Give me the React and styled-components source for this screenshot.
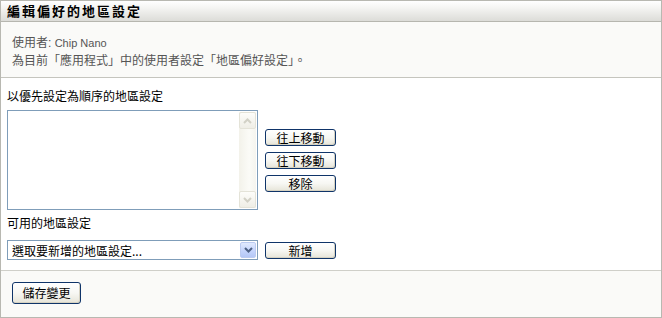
import React from "react";
import styled, { createGlobalStyle } from "styled-components";

const Global = createGlobalStyle`
  html, body { margin: 0; padding: 0; background: #fff; }
  body {
    font-family: "Liberation Sans", "Noto Sans CJK TC", sans-serif;
    font-size: 12px;
    color: #000;
  }
  * { box-sizing: border-box; }
`;

const Panel = styled.div`
  width: 662px;
  height: 318px;
  border: 1px solid #b8b8b1;
  display: flex;
  flex-direction: column;
  background: #fff;
`;

const Header = styled.div`
  height: 21px;
  flex: none;
  border-bottom: 1px solid #b6b6af;
  background: linear-gradient(#ffffff 0%, #f4f4f2 35%, #dcdcd8 100%);
  padding-left: 6px;
  display: flex;
  align-items: center;
`;

const Title = styled.h1`
  margin: 0;
  font-size: 13px;
  font-weight: 700;
  letter-spacing: 2px;
  line-height: 20px;
  font-family: "Noto Sans CJK TC", sans-serif;
  color: #000;
`;

const Info = styled.div`
  height: 56px;
  flex: none;
  background: #fafaf8;
  border-bottom: 1px solid #c5c5be;
  padding: 12px 0 0 11px;
  color: #555;
`;

const Line = styled.div`
  line-height: 18px;
  height: 18px;
  white-space: nowrap;
`;

const Latin = styled.span`
  font-size: 11px;
`;

const Main = styled.div`
  flex: none;
  height: 193px;
  border-bottom: 1px solid #cfcfc9;
  padding: 10px 0 0 6px;
  display: flex;
  flex-direction: column;
`;

const Label = styled.div`
  line-height: 18px;
  height: 18px;
  white-space: nowrap;
`;

const ListRow = styled.div`
  display: flex;
  align-items: center;
  gap: 7px;
  margin-top: 4px;
`;

const ListBox = styled.div`
  width: 251px;
  height: 100px;
  border: 1px solid #7f9db9;
  background: #fff;
  display: flex;
  justify-content: flex-end;
  padding: 1px;
`;

const ScrollBar = styled.div`
  width: 17px;
  height: 100%;
  background: linear-gradient(to right, #f3f2ea, #fbfbf7 60%, #f5f4ee);
  display: flex;
  flex-direction: column;
  justify-content: space-between;
`;

const ScrollBtn = styled.div`
  width: 17px;
  height: 17px;
  border: 1px solid #e4e3d8;
  border-radius: 2px;
  background: linear-gradient(#fdfdfa, #efeee6);
  display: flex;
  align-items: center;
  justify-content: center;
`;

const ButtonCol = styled.div`
  display: flex;
  flex-direction: column;
  gap: 6px;
`;

const Button = styled.button`
  width: ${(p) => p.$w || 71}px;
  height: ${(p) => p.$h || 17}px;
  padding: 0;
  margin: 0;
  border: 1px solid #0f3469;
  border-radius: 3px;
  background: linear-gradient(#ffffff 0%, #f7f7f3 50%, #e6e4d8 100%);
  box-shadow: inset -1px -1px 0 #d6d2c2;
  font-family: "Noto Sans CJK TC", sans-serif;
  font-size: 12px;
  line-height: ${(p) => (p.$h || 17) - 2}px;
  color: #000;
  cursor: pointer;
  text-align: center;
`;

const SubLabel = styled(Label)`
  margin-top: 5px;
`;

const SelectRow = styled.div`
  display: flex;
  align-items: center;
  gap: 7px;
  margin-top: 7px;
`;

const Select = styled.div`
  width: 251px;
  height: 20px;
  border: 1px solid #7f9db9;
  background: #fff;
  display: flex;
  align-items: center;
  justify-content: space-between;
  padding: 0 1px 0 4px;
  font-family: "Noto Sans CJK TC", sans-serif;
  white-space: nowrap;
`;

const DropBtn = styled.div`
  width: 16px;
  height: 16px;
  border: 1px solid #bccbf1;
  border-radius: 2px;
  background: linear-gradient(#e1eafe, #c3d3fc 60%, #b4c7f6);
  display: flex;
  align-items: center;
  justify-content: center;
`;

const Footer = styled.div`
  flex: 1;
  background: #fafaf8;
  padding: 11px 0 0 11px;
`;

const Chevron = ({ up, color }) => (
  <svg width="9" height="6" viewBox="0 0 9 6">
    <path
      d={up ? "M1 5 L4.5 1.5 L8 5" : "M1 1 L4.5 4.5 L8 1"}
      fill="none"
      stroke={color}
      strokeWidth="2"
    />
  </svg>
);

export default function App() {
  return (
    <>
      <Global />
      <Panel>
        <Header>
          <Title>編輯偏好的地區設定</Title>
        </Header>
        <Info>
          <Line>
            使用者: <Latin>Chip Nano</Latin>
          </Line>
          <Line>為目前「應用程式」中的使用者設定「地區偏好設定」。</Line>
        </Info>
        <Main>
          <Label>以優先設定為順序的地區設定</Label>
          <ListRow>
            <ListBox>
              <ScrollBar>
                <ScrollBtn>
                  <Chevron up color="#d2d1c6" />
                </ScrollBtn>
                <ScrollBtn>
                  <Chevron color="#d2d1c6" />
                </ScrollBtn>
              </ScrollBar>
            </ListBox>
            <ButtonCol>
              <Button>往上移動</Button>
              <Button>往下移動</Button>
              <Button>移除</Button>
            </ButtonCol>
          </ListRow>
          <SubLabel>可用的地區設定</SubLabel>
          <SelectRow>
            <Select>
              <span>選取要新增的地區設定...</span>
              <DropBtn>
                <Chevron color="#4d6185" />
              </DropBtn>
            </Select>
            <Button>新增</Button>
          </SelectRow>
        </Main>
        <Footer>
          <Button $w={69} $h={22}>儲存變更</Button>
        </Footer>
      </Panel>
    </>
  );
}
